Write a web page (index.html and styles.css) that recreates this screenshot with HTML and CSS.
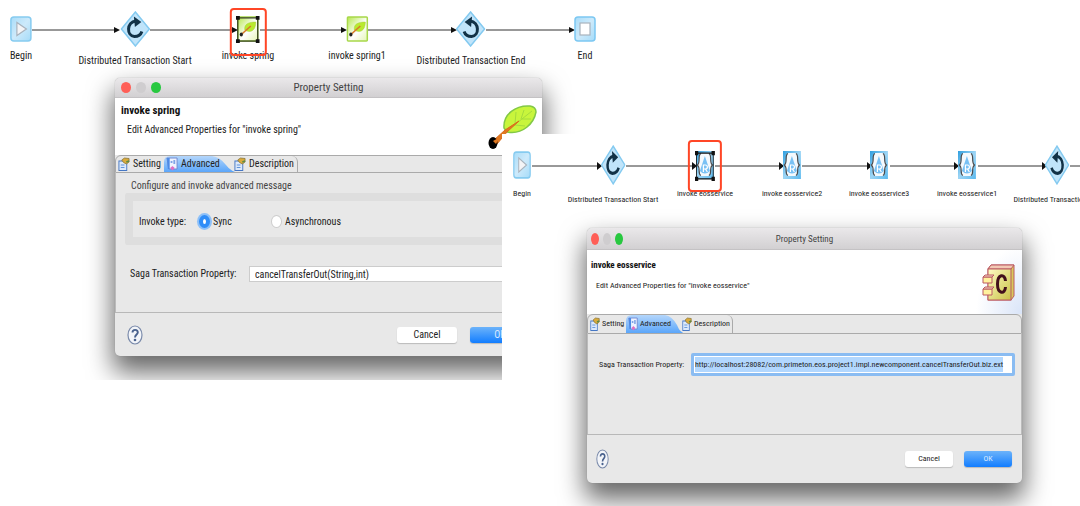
FILE: index.html
```html
<!DOCTYPE html>
<html lang="en">
<head>
<meta charset="utf-8">
<title>Property Setting</title>
<link rel="stylesheet" href="styles.css">
</head>
<body>
<svg width="0" height="0" class="defs" aria-hidden="true">
  <defs>
    <linearGradient id="blue" x1="0" y1="0" x2="1" y2="1"><stop offset="0" stop-color="#a9dcf8"/><stop offset=".5" stop-color="#cdeafb"/><stop offset="1" stop-color="#a5dbf8"/></linearGradient>
    <linearGradient id="green" x1="0" y1="0" x2="1" y2="1"><stop offset="0" stop-color="#b5e84a"/><stop offset=".55" stop-color="#ffffff"/><stop offset="1" stop-color="#e4f6b4"/></linearGradient>
    <linearGradient id="gold" x1="0" y1="0" x2="1" y2="1"><stop offset="0" stop-color="#fffcc4"/><stop offset="1" stop-color="#c9c248"/></linearGradient>
    <linearGradient id="sky" x1="0" y1="0" x2="1" y2="1"><stop offset="0" stop-color="#2f9fe0"/><stop offset=".5" stop-color="#9dd5f5"/><stop offset="1" stop-color="#5bb9ee"/></linearGradient>
  </defs>
  <symbol id="begin" viewBox="0 0 22 26" preserveAspectRatio="none">
    <rect x="1" y="1" width="20" height="24" rx="3" fill="url(#blue)" stroke="#86cbf0" stroke-width="1.5"/>
    <path d="M7 6.5V19.500L16.500 13Z" fill="#f4f4f6" stroke="#a9b3bd" stroke-width="1.200"/>
  </symbol>
  <symbol id="end" viewBox="0 0 22 26" preserveAspectRatio="none">
    <rect x="1" y="1" width="20" height="24" rx="3" fill="url(#blue)" stroke="#7cc8f2" stroke-width="1.500"/>
    <rect x="6" y="7" width="10" height="12" fill="#fff" stroke="#a9b3bd" stroke-width="1.200"/>
  </symbol>
  <symbol id="start-tx" viewBox="0 0 30 36" preserveAspectRatio="none">
    <path d="M15 1L29 18L15 35L1 18Z" fill="#c0e4fa" stroke="#84caf0" stroke-width="1.500"/>
    <path d="M15.500 10C6 11 6 25 14 25.500C18 25.500 20.500 23.500 21.500 20.500" fill="none" stroke="#123247" stroke-width="3"/>
    <path d="M13.500 5.500L21 11L14.500 16Z" fill="#123247"/>
  </symbol>
  <symbol id="end-tx" viewBox="0 0 30 36" preserveAspectRatio="none">
    <path d="M15 1L29 18L15 35L1 18Z" fill="#c0e4fa" stroke="#84caf0" stroke-width="1.500"/>
    <path d="M14.500 10C24 11 24 25 16 25.500C12 25.500 9.500 23.500 8.500 20.500" fill="none" stroke="#123247" stroke-width="3"/>
    <path d="M16.500 5.500L9 11L15.500 16Z" fill="#123247"/>
  </symbol>
  <symbol id="spring" viewBox="0 0 22 26" preserveAspectRatio="none">
    <rect x="1" y="1" width="20" height="24" rx="1" fill="url(#green)" stroke="#a8d84a" stroke-width="1.600"/>
    <path d="M8 14C7 8 12 6 19 6C19 12 16 17 10 15Z" fill="#b9ea2e" stroke="#a0cf3a" stroke-width=".5"/>
    <path d="M14 10L4.500 18.500" stroke="#d77a28" stroke-width="1.600"/>
    <ellipse cx="4.500" cy="18.500" rx="1.600" ry="2" fill="#222"/>
  </symbol>
  <symbol id="eos" viewBox="0 0 18 28" preserveAspectRatio="none">
    <rect x="0" y="0" width="18" height="28" fill="url(#sky)"/>
    <path d="M5 2H13C15.500 4 14 10 16.500 14C14 18 15.500 23 13 25H5C2.500 23 4 18 1.500 14C4 10 2.500 4 5 2Z" fill="#f4f9fd"/>
    <path d="M5 2.500C1.500 4 5 11 1.500 14C5 17 1.500 23 5 24.500M13 2.500C16.500 4 13 11 16.500 14C13 17 16.500 23 13 24.500" fill="none" stroke="#4a4a4c" stroke-width="1.200"/>
    <path d="M9 5L14 20Q9 25 4 20Z" fill="#79c1f4"/>
    <path d="M7.500 21V14H9.500Q11.500 14 11.500 16T9.500 18H7.500M9.500 18L11.500 21" fill="none" stroke="#fff" stroke-width="1.200"/>
  </symbol>
  <symbol id="handles" viewBox="0 0 24 28" preserveAspectRatio="none">
    <path d="M2 2H22V26H2Z" fill="none" stroke="#111" stroke-width="1"/>
    <path d="M0 0H4V4H0ZM20 0H24V4H20ZM0 24H4V28H0ZM20 24H24V28H20Z" fill="#111"/>
  </symbol>
  <symbol id="sheet" viewBox="0 0 13 14" preserveAspectRatio="none">
    <rect x="1" y="4" width="8.500" height="9.500" fill="#dce9fb" stroke="#4577c4"/>
    <path d="M3 8H7M3 10.500H7" stroke="#5d91d9"/>
    <path d="M4 3L7 1L12 1.500V5L9 7L6 5.500Z" fill="#d9aa3c" stroke="#7d6a2e" stroke-width=".7"/>
    <path d="M9 5L12 4" stroke="#5b8c46" stroke-width="1.500"/>
  </symbol>
  <symbol id="form" viewBox="0 0 13 14" preserveAspectRatio="none">
    <path d="M1 1H12V12H3Z" fill="#eef3ff" stroke="#6f87cf"/>
    <path d="M1 1H4V12H2Z" fill="#4d8be6"/>
    <path d="M5 4H7V6H5ZM8 3H10V7H8Z" fill="#7fa4e6"/>
    <path d="M7 9L9.500 11L7 13.500L4.500 11Z" fill="#df6fc4"/>
  </symbol>
  <symbol id="help" viewBox="0 0 16 20" preserveAspectRatio="none">
    <ellipse cx="8" cy="10" rx="7" ry="9" fill="#f3f5f9" stroke="#7b8bab" stroke-width="1.200"/>
    <path d="M5.500 7.500C5.500 4 10.800 4 10.800 7.500C10.800 9.500 8 9.700 8 12.500" fill="none" stroke="#4a628e" stroke-width="1.900"/>
    <circle cx="8" cy="15" r="1.300" fill="#4a628e"/>
  </symbol>
</svg>

<main class="board">
  <section class="capture first">
    <svg class="wires" width="600" height="70" aria-hidden="true">
      <path d="M32 30H114M150 30H232M260 30H342M368 30H451M486 30H569"/>
      <path class="tip" d="M114 27L120 30L114 33ZM232 27L238 30L232 33ZM341 27L347 30L341 33ZM451 27L457 30L451 33ZM569 27L575 30L569 33Z"/>
    </svg>
    <div class="node" style="left:21px"><svg class="icon"><use href="#begin"/></svg><span>Begin</span></div>
    <div class="node tx" style="left:135px"><svg class="icon"><use href="#start-tx"/></svg><span>Distributed Transaction Start</span></div>
    <div class="node" style="left:248px"><svg class="icon"><use href="#spring"/></svg><svg class="grips"><use href="#handles"/></svg><span>invoke spring</span><i class="mark"></i></div>
    <div class="node" style="left:357px"><svg class="icon"><use href="#spring"/></svg><span>invoke spring1</span></div>
    <div class="node tx" style="left:471px"><svg class="icon"><use href="#end-tx"/></svg><span>Distributed Transaction End</span></div>
    <div class="node" style="left:585px"><svg class="icon"><use href="#end"/></svg><span>End</span></div>

    <div class="dialog">
      <div class="titlebar"><i class="dot red"></i><i class="dot gray"></i><i class="dot green"></i><h1>Property Setting</h1></div>
      <header class="intro">
        <div><h2>invoke spring</h2><p>Edit Advanced Properties for "invoke spring"</p></div>
        <svg class="leaf" viewBox="0 0 50 46">
          <path d="M16 24C15 10 28 1 42 2Q48 3 48 8C46 19 35 31 19 28Z" fill="#c8f53c" stroke="#82c846" stroke-width="1.500"/>
          <path d="M20 26L44 7M27 20L28 8M33 15L36 6M27 21L37 22M34 15L43 15" stroke="#a5dc3c" fill="none"/>
          <path d="M31 17L17 26L6 36L9 40L19 28Z" fill="#e07820" stroke="#d96c1c"/>
          <ellipse cx="5" cy="39" rx="4.500" ry="6" fill="#000"/><path d="M5 37L12 33L8 40Z" fill="#e07820"/>
        </svg>
      </header>
      <nav class="tabs">
        <button class="tab" type="button"><svg><use href="#sheet"/></svg>Setting</button>
        <button class="tab on" type="button"><svg><use href="#form"/></svg>Advanced</button>
        <button class="tab" type="button"><svg><use href="#sheet"/></svg>Description</button>
      </nav>
      <div class="pane">
        <p class="caption">Configure and invoke advanced message</p>
        <div class="group" role="radiogroup">
          <span class="lead">Invoke type:</span>
          <label class="choice"><input type="radio" name="type" checked>Sync</label>
          <label class="choice"><input type="radio" name="type">Asynchronous</label>
        </div>
        <div class="field"><label for="saga1">Saga Transaction Property:</label><input id="saga1" type="text" value="cancelTransferOut(String,int)"></div>
      </div>
      <footer class="actions"><svg class="help"><use href="#help"/></svg><button type="button">Cancel</button><button type="button" class="primary">OK</button></footer>
    </div>
  </section>

  <section class="capture second">
    <svg class="wires" width="578" height="70" aria-hidden="true">
      <path d="M30 32H95M124 32H190M213 32H278M300 32H366M388 32H454M476 32H541M568 32H578"/>
      <path class="tip" d="M95 28L100 32L95 36ZM190 28L195 32L190 36ZM277 28L282 32L277 36ZM365 28L370 32L365 36ZM452 28L457 32L452 36ZM540 28L545 32L540 36Z"/>
    </svg>
    <div class="node" style="left:20px"><svg class="icon"><use href="#begin"/></svg><span>Begin</span></div>
    <div class="node tx" style="left:111px"><svg class="icon"><use href="#start-tx"/></svg><span>Distributed Transaction Start</span></div>
    <div class="node" style="left:203px"><svg class="icon"><use href="#eos"/></svg><svg class="grips"><use href="#handles"/></svg><span>invoke eosservice</span><i class="mark"></i></div>
    <div class="node" style="left:290px"><svg class="icon"><use href="#eos"/></svg><span>invoke eosservice2</span></div>
    <div class="node" style="left:377px"><svg class="icon"><use href="#eos"/></svg><span>invoke eosservice3</span></div>
    <div class="node" style="left:465px"><svg class="icon"><use href="#eos"/></svg><span>invoke eosservice1</span></div>
    <div class="node tx" style="left:555px"><svg class="icon"><use href="#end-tx"/></svg><span>Distributed Transaction End</span></div>

    <div class="dialog">
      <div class="titlebar"><i class="dot red"></i><i class="dot gray"></i><i class="dot green"></i><h1>Property Setting</h1></div>
      <header class="intro">
        <div><h2>invoke eosservice</h2><p>Edit Advanced Properties for "invoke eosservice"</p></div>
        <svg class="component" viewBox="0 0 33 38" preserveAspectRatio="none">
          <path d="M6 5L9 1H32V32L29 36H6Z" fill="#d8c95a" stroke="#bb5a62"/>
          <path d="M6 5L9 1H32L29 5Z" fill="#f2c9b4" stroke="#bb5a62"/>
          <rect x="6" y="5" width="23" height="31" fill="url(#gold)" stroke="#bb5a62"/>
          <path d="M1 13H10V19H1ZM1 25H10V31H1Z" fill="#fff29e" stroke="#bb5a62"/>
          <path d="M1 13L3 11H12L10 13ZM1 25L3 23H12L10 25Z" fill="#f7d6c2" stroke="#bb5a62"/>
          <path d="M23.500 17C23 9 15.500 10 15.500 20S23 31 23.500 23" fill="none" stroke="#42101c" stroke-width="3"/>
        </svg>
      </header>
      <nav class="tabs">
        <button class="tab" type="button"><svg><use href="#sheet"/></svg>Setting</button>
        <button class="tab on" type="button"><svg><use href="#form"/></svg>Advanced</button>
        <button class="tab" type="button"><svg><use href="#sheet"/></svg>Description</button>
      </nav>
      <div class="pane">
        <div class="field"><label for="saga2">Saga Transaction Property:</label><div class="box"><input id="saga2" type="text" value="http://localhost:28082/com.primeton.eos.project1.impl.newcomponent.cancelTransferOut.biz.ext"></div></div>
      </div>
      <footer class="actions"><svg class="help"><use href="#help"/></svg><button type="button">Cancel</button><button type="button" class="primary">OK</button></footer>
    </div>
  </section>
</main>
</body>
</html>
```
FILE: styles.css
```css
* { box-sizing: border-box; }
body { margin: 0; background: #fff; color: #222; font-family: "Roboto Condensed", "Noto Sans CJK SC", sans-serif; font-size: 10px; line-height: 14px; }
h1, h2, p { margin: 0; }
.defs { position: absolute; }
button, input { font: inherit; color: inherit; }
.board { position: relative; min-height: 100vh; overflow: hidden; }
.capture { position: absolute; overflow: hidden; background: #fff; }
.first { left: 0; top: 0; width: 640px; padding: 78px 98px 24px 115px; }
.second { left: 502px; top: 134px; right: 0; padding: 94px 58px 24px 85px; font-size: 8px; }

.wires { position: absolute; left: 0; top: 0; fill: none; stroke: #333; }
.tip { fill: #111; stroke: none; }
.node { position: absolute; top: 16px; display: flex; flex-direction: column; align-items: center; gap: 7px; transform: translateX(-50%); white-space: nowrap; }
.node.tx { top: 11px; }
.icon { width: 22px; height: 26px; }
.tx .icon { width: 30px; height: 36px; }
.grips { position: absolute; top: 0; width: 24px; height: 27px; }
.mark { position: absolute; top: -8px; width: 37px; height: 48px; border: 2px solid #ff4626; border-radius: 4px; }
.second .icon { width: 18px; height: 28px; }
.second .tx .icon { width: 25px; height: 40px; }
.second .node { top: 17px; gap: 8px; }
.second .node.tx { top: 11px; }
.second .grips { width: 20px; height: 30px; }
.second .mark { top: -11px; width: 34px; height: 52px; }

.dialog { position: relative; border-radius: 5px; background: #e8e8e8; box-shadow: 0 0 1px #888, 0 14px 26px 2px rgba(0, 0, 0, .6); }
.titlebar { position: relative; display: flex; align-items: center; gap: 5px; height: 20px; padding: 0 6px; border-bottom: 1px solid #c4c2c4; border-radius: 5px 5px 0 0; background: linear-gradient(#eae8ea, #d2d0d2); }
.titlebar h1 { position: absolute; inset: 0; text-align: center; font-size: 11px; font-weight: 400; line-height: 20px; color: #444; }
.dot { width: 10px; height: 11px; border-radius: 50%; }
.red { background: #ff5f57; }
.gray { background: #cfcdcf; }
.green { background: #28c840; }
.intro { display: flex; justify-content: space-between; height: 57px; padding: 6px 4px 0 6px; background: #fff; }
.intro h2 { font-size: 11px; line-height: 14px; color: #111; }
.intro p { padding: 5px 0 0 6px; }
.leaf { width: 50px; height: 46px; }
.component { width: 33px; height: 38px; margin-top: 6px; }
.tabs { display: flex; height: 18px; border: 1px solid #aaa; border-radius: 6px 6px 0 0; background: #e8e8e8; }
.tab { display: flex; align-items: center; gap: 3px; flex: none; width: 48px; padding: 0 0 0 2px; border: 0; background: none; white-space: nowrap; }
.tab svg { flex: none; width: 12px; height: 14px; }
.tab.on { width: 76px; margin-right: -6px; background: linear-gradient(#b4d6fb, #5ba6fa); clip-path: path("M0 20V6Q0 0 6 0H48Q56 1 62 9Q67 16 76 17V20Z"); }
.tab:last-child { position: relative; width: 64px; border-right: 1px solid #aaa; border-radius: 0 6px 0 0; padding-left: 0; }
.pane { height: 139px; padding: 6px 0 0 9px; border-left: 1px solid #bbb; border-right: 1px solid #bbb; }
.caption { padding-left: 6px; color: #444; }
.group { display: flex; align-items: center; height: 52px; padding: 5px 0 0 6px; border: 8px solid #dedede; border-right: 0; border-radius: 3px; }
.lead { width: 60px; }
.choice { display: flex; align-items: center; gap: 3px; width: 72px; }
.choice input { appearance: none; flex: none; width: 11px; height: 13px; margin: 0; border: 1px solid #ccc; border-radius: 50%; background: #fff; }
.choice input:checked { border: 4px solid #2f8df8; box-shadow: 0 0 0 2px #8dc0f8; }
.field { display: flex; align-items: center; }
.first .field { padding: 21px 12px 0 5px; }
.field label { width: 119px; flex: none; white-space: nowrap; }
.field input { flex: 1; height: 16px; padding: 0 5px; border: 1px solid #ccc; background: #fff; }
.actions { display: flex; align-items: center; gap: 13px; height: 44px; padding: 0 12px; border-top: 1px solid #b8b8b8; }
.help { width: 16px; height: 20px; margin-right: auto; }
.actions button { width: 60px; height: 16px; padding: 0; border: 0; border-radius: 3px; background: #fff; box-shadow: 0 1px 1px #bbb; line-height: 16px; }
.actions .primary { background: linear-gradient(#6cb3fa, #127dff); color: #d9eaff; }

.second .titlebar { height: 22px; padding: 0 4px; gap: 4px; }
.second .titlebar h1 { font-size: 9px; line-height: 23px; }
.second .dot { width: 8px; height: 12px; }
.second .intro { height: 64px; padding: 8px 7px 0 4px; background: radial-gradient(ellipse 46px 68px at 100% 100%, #d9e4f8, #fff); }
.second .intro h2 { font-size: 9px; }
.second .intro p { padding-left: 5px; padding-top: 7px; }
.second .tabs { height: 20px; }
.second .tab { width: 38px; gap: 2px; }
.second .tab svg { width: 10px; }
.second .tab.on { width: 60px; margin-right: -4px; clip-path: path("M0 20V6Q0 0 6 0H39Q46 1 51 10Q54 18 60 19V20Z"); }
.second .tab:last-child { width: 51px; }
.second .pane { height: 100px; padding: 19px 6px 0 11px; }
.second .field label { width: 92px; }
.box { display: flex; flex: 1; min-width: 0; height: 23px; border: 3px solid #8abcf2; border-radius: 2px; background: #fff; padding: 1px; }
.box input { min-width: 0; height: 15px; border: 0; padding: 0; background: linear-gradient(#b2d7fe, #b2d7fe) no-repeat 0 0 / 308px 100%; }
.second .actions { height: 49px; padding: 0 10px 0 9px; gap: 11px; }
.second .actions button { width: 48px; }
.second .help { width: 13px; }
```
